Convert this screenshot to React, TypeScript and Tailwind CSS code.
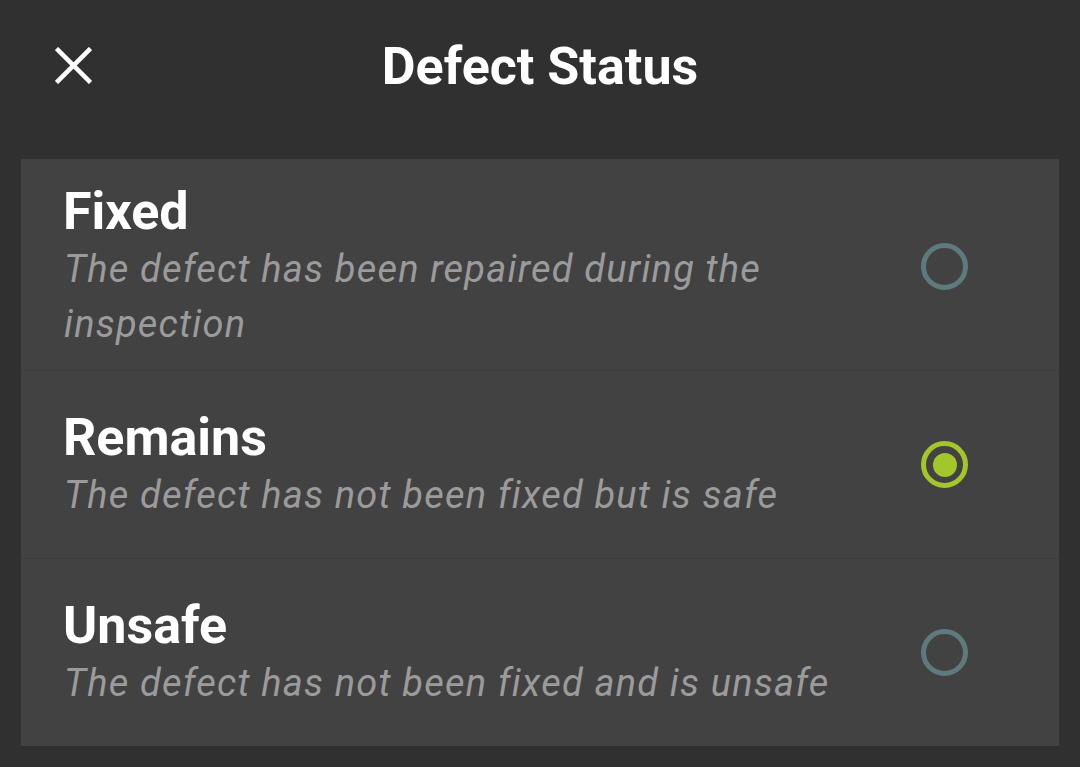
import React, { useState } from 'react';

type Option = {
  id: string;
  label: string;
  description: string;
};

const OPTIONS: Option[] = [
  { id: 'fixed', label: 'Fixed', description: 'The defect has been repaired during the inspection' },
  { id: 'remains', label: 'Remains', description: 'The defect has not been fixed but is safe' },
  { id: 'unsafe', label: 'Unsafe', description: 'The defect has not been fixed and is unsafe' },
];

const Radio: React.FC<{ checked: boolean }> = ({ checked }) => (
  <span
    className={`w-[47px] h-[47px] rounded-full border-[5px] flex items-center justify-center shrink-0 ${
      checked ? 'border-[#a3c62a]' : 'border-[#5e7a7c]'
    }`}
  >
    {checked && <span className="w-[24px] h-[24px] rounded-full bg-[#a3c62a]" />}
  </span>
);

export default function App() {
  const [selected, setSelected] = useState('remains');

  return (
    <div className="min-h-[767px] bg-[#303030] font-['Roboto',sans-serif] flex flex-col">
      {/* header */}
      <div className="relative h-[136px] flex items-center justify-center">
        <button className="absolute left-[55px] top-[47px] w-[37px] h-[37px] text-white">
          <svg viewBox="0 0 37 37" width="37" height="37" fill="none" stroke="currentColor" strokeWidth="4.5">
            <line x1="1.5" y1="1.5" x2="35.5" y2="35.5" />
            <line x1="35.5" y1="1.5" x2="1.5" y2="35.5" />
          </svg>
        </button>
        <h1 className="text-white font-bold text-[52px] leading-none -mt-[2px]">Defect Status</h1>
      </div>

      {/* options */}
      <div className="mx-[21px] mt-[23px] bg-[#424242] flex flex-col">
        {OPTIONS.map((opt, i) => (
          <div
            key={opt.id}
            onClick={() => setSelected(opt.id)}
            className={`min-h-[188px] pl-[42px] pr-[91px] flex items-center gap-6 cursor-pointer ${
              i > 0 ? 'border-t border-[#3c3c3c] py-[20px]' : 'pt-[22px] pb-[18px]'
            }`}
          >
            <div className="flex-1 min-w-0">
              <div className="text-white font-bold text-[52px] leading-[61px]">{opt.label}</div>
              <div className="text-[#9b9b9b] italic text-[38px] leading-[55px] tracking-[1.2px] max-w-[820px] pl-[1px]">
                {opt.description}
              </div>
            </div>
            <Radio checked={selected === opt.id} />
          </div>
        ))}
      </div>
    </div>
  );
}
